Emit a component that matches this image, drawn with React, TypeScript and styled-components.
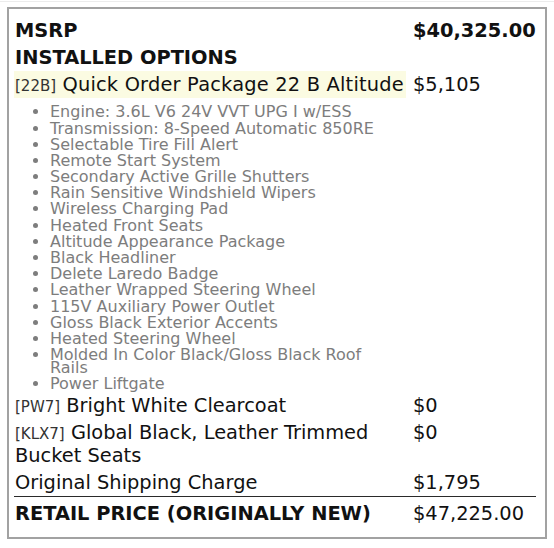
import React from "react";
import styled, { createGlobalStyle } from "styled-components";

const options: string[] = [
  "Engine: 3.6L V6 24V VVT UPG I w/ESS",
  "Transmission: 8-Speed Automatic 850RE",
  "Selectable Tire Fill Alert",
  "Remote Start System",
  "Secondary Active Grille Shutters",
  "Rain Sensitive Windshield Wipers",
  "Wireless Charging Pad",
  "Heated Front Seats",
  "Altitude Appearance Package",
  "Black Headliner",
  "Delete Laredo Badge",
  "Leather Wrapped Steering Wheel",
  "115V Auxiliary Power Outlet",
  "Gloss Black Exterior Accents",
  "Heated Steering Wheel",
  "Molded In Color Black/Gloss Black Roof Rails",
  "Power Liftgate",
];

function App() {
  return (
    <Page>
      <GlobalStyle />
      <TopRule />
      <Sticker>
        <Row>
          <Label $bold>MSRP</Label>
          <Price $bold>$40,325.00</Price>
        </Row>
        <Row>
          <Label $bold>INSTALLED OPTIONS</Label>
        </Row>
        <Row>
          <Label $highlight $wide>
            <Code>[22B]</Code> Quick Order Package 22 B Altitude
          </Label>
          <Price>$5,105</Price>
        </Row>
        <Row>
          <OptionList>
            {options.map((o) => (
              <li key={o}>{o}</li>
            ))}
          </OptionList>
        </Row>
        <Row>
          <Label>
            <Code>[PW7]</Code> Bright White Clearcoat
          </Label>
          <Price>$0</Price>
        </Row>
        <Row>
          <Label>
            <Code>[KLX7]</Code> Global Black, Leather Trimmed Bucket Seats
          </Label>
          <Price>$0</Price>
        </Row>
        <Row>
          <Label>Original Shipping Charge</Label>
          <Price>$1,795</Price>
        </Row>
        <Rule />
        <Row $total>
          <Label $bold>RETAIL PRICE (ORIGINALLY NEW)</Label>
          <Price>$47,225.00</Price>
        </Row>
      </Sticker>
    </Page>
  );
}

const GlobalStyle = createGlobalStyle`
  body {
    margin: 0;
    background: #ffffff;
    font-family: "DejaVu Sans", Verdana, sans-serif;
  }
`;

const Page = styled.div`
  padding-top: 1px;
  width: 554px;
`;

const TopRule = styled.div`
  height: 1px;
  background: #ececec;
  margin-bottom: 5px;
`;

const Sticker = styled.div`
  box-sizing: border-box;
  width: 540px;
  margin-left: 7px;
  border: 2px solid #a2a2a2;
  padding: 8px 9px 10px 5px;
  color: #111111;
  font-size: 19.4px;
  line-height: 23px;
`;

const Row = styled.div<{ $total?: boolean }>`
  display: grid;
  grid-template-columns: 392px 1fr;
  column-gap: 6px;
  padding-top: ${(p) => (p.$total ? "3px" : "0")};
`;

const Label = styled.div<{ $bold?: boolean; $highlight?: boolean; $wide?: boolean }>`
  padding: 2px 1px;
  font-weight: ${(p) => (p.$bold ? 700 : 400)};
  background: ${(p) => (p.$highlight ? "#fbfbe2" : "transparent")};
  letter-spacing: ${(p) => (p.$wide ? "0.2px" : "normal")};
`;

const Price = styled.div<{ $bold?: boolean }>`
  padding: 2px 1px;
  font-weight: ${(p) => (p.$bold ? 700 : 400)};
`;

const Code = styled.span`
  font-size: 15px;
  line-height: 1;
  letter-spacing: normal;
  color: #333333;
`;

const OptionList = styled.ul`
  margin: 0;
  padding: 6px 14px 0 36px;
  font-size: 16px;
  line-height: 13.3px;
  color: #7d7d7d;
  list-style: disc;

  li {
    padding: 1.45px 0;
  }
`;

const Rule = styled.div`
  height: 1px;
  background: #2a2a2a;
`;

export default App;
